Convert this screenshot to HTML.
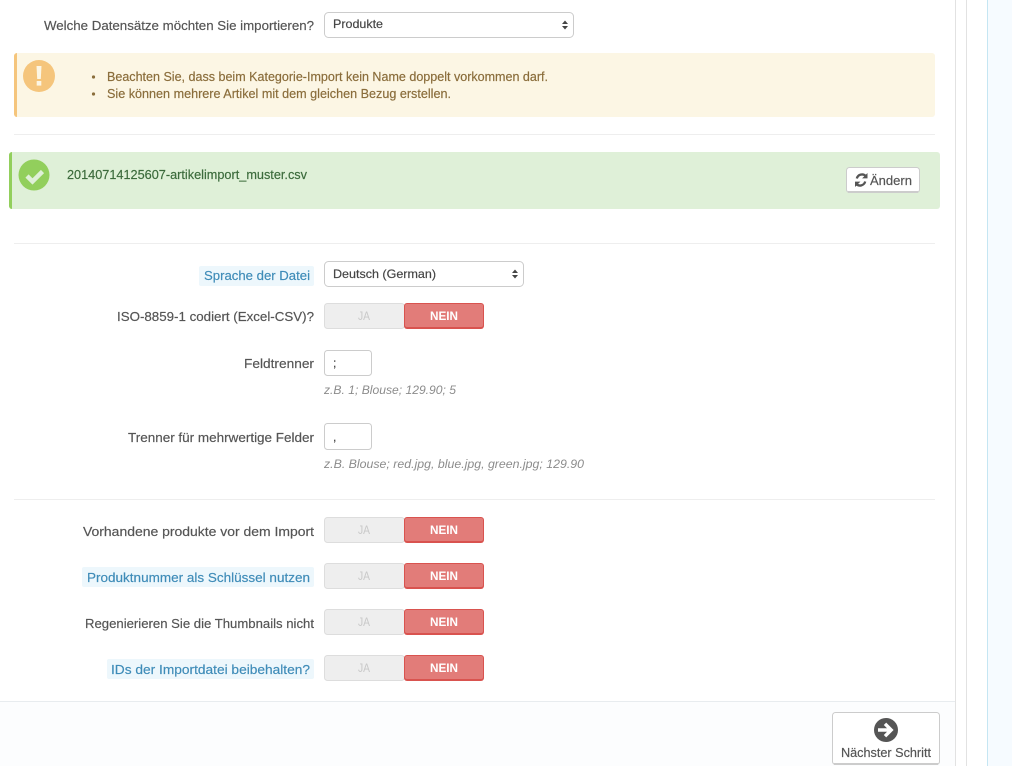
<!DOCTYPE html>
<html lang="de">
<head>
<meta charset="utf-8">
<title>Import</title>
<style>
html,body{margin:0;padding:0;background:#fff;width:1012px;height:766px;overflow:hidden}
svg{display:block}
text{font-family:"Liberation Sans",sans-serif;font-size:13px;fill:#555;stroke:#555;stroke-width:.18px}
.b{fill:#3f8cb8;stroke:#3f8cb8}
.w{fill:#8a6d3b;stroke:#8a6d3b;font-size:12.5px}
.h{fill:#8c8c8c;stroke:none;font-size:12px;font-style:italic}
.ja{fill:#c8c8c8;stroke:none;font-size:12px}
.ne{fill:#fff;stroke:none;font-size:12px;font-weight:bold}
.s{font-size:12px;fill:#444;stroke:#444}
.g{fill:#3c6b3c;stroke:#3c6b3c;font-size:12.5px}
.c{fill:#fff;stroke:#ccc;stroke-width:1}
</style>
</head>
<body>
<svg width="1012" height="766" viewBox="0 0 1012 766" xmlns="http://www.w3.org/2000/svg">
<defs>
<g id="sw">
<rect x="324.5" y="0.5" width="80" height="25" rx="3" fill="#eee" stroke="#ddd"/>
<rect x="404" y="0" width="80" height="26" rx="3" fill="#d9534f"/>
<rect x="405" y="1" width="78" height="23" rx="2" fill="#e27c79"/>
<text class="ja" x="358" y="17" textLength="12" lengthAdjust="spacingAndGlyphs">JA</text>
<text class="ne" x="430" y="17" textLength="28" lengthAdjust="spacingAndGlyphs">NEIN</text>
</g>
<g id="ar"><path d="M0 -4.5L3 -1H-3Z M0 4.5L3 1H-3Z" fill="#444"/></g>
</defs>

<rect x="955" y="0" width="1" height="766" fill="#e2e2e2"/>
<rect x="966" y="0" width="1" height="766" fill="#e2e2e2"/>
<rect x="987" y="0" width="1" height="766" fill="#c5e6f3"/>
<rect x="988" y="0" width="24" height="766" fill="#f6fbff"/>

<text x="44" y="30" textLength="270" lengthAdjust="spacingAndGlyphs">Welche Datensätze möchten Sie importieren?</text>
<rect class="c" x="324.5" y="12.5" width="249" height="25" rx="4"/>
<text class="s" x="333" y="28" textLength="50" lengthAdjust="spacingAndGlyphs">Produkte</text>
<use href="#ar" x="565" y="25"/>

<rect x="14" y="53" width="921" height="64" rx="3" fill="#fcf6e4"/>
<path d="M17 53a3 3 0 0 0-3 3v58a3 3 0 0 0 3 3z" fill="#f5c57c"/>
<circle cx="39" cy="76" r="16" fill="#f5c57c"/>
<path d="M36.5 66h5l-.7 13h-3.6z" fill="#fcf6e4"/>
<rect x="36.7" y="81" width="4.6" height="4.6" fill="#fcf6e4"/>
<circle cx="93.5" cy="77" r="1.6" fill="#8a6d3b"/>
<circle cx="93.5" cy="94" r="1.6" fill="#8a6d3b"/>
<text class="w" x="107" y="81" textLength="441" lengthAdjust="spacingAndGlyphs">Beachten Sie, dass beim Kategorie-Import kein Name doppelt vorkommen darf.</text>
<text class="w" x="107" y="98" textLength="344" lengthAdjust="spacingAndGlyphs">Sie können mehrere Artikel mit dem gleichen Bezug erstellen.</text>

<rect x="14" y="134" width="921" height="1" fill="#eee"/>

<rect x="9" y="152" width="931" height="57" rx="3" fill="#dff0d8"/>
<path d="M12 152a3 3 0 0 0-3 3v51a3 3 0 0 0 3 3z" fill="#92cf5c"/>
<circle cx="34" cy="175" r="15.5" fill="#92cf5c"/>
<path d="M27 176l5.5 5.5 10-10" fill="none" stroke="#dff0d8" stroke-width="4.5"/>
<text class="g" x="67" y="179" textLength="240" lengthAdjust="spacingAndGlyphs">20140714125607-artikelimport_muster.csv</text>

<rect x="846.5" y="167.5" width="73" height="25" rx="3" fill="#fff" stroke="#ccc"/>
<rect x="848" y="191" width="70" height="2" fill="#ccc"/>
<path d="M856.8 178.5a5.4 5.4 0 0 1 9-2.5" fill="none" stroke="#555" stroke-width="2.3"/>
<path d="M867.5 173v5.4h-5.4z" fill="#555"/>
<path d="M865.2 181.5a5.4 5.4 0 0 1-9 2.5" fill="none" stroke="#555" stroke-width="2.3"/>
<path d="M855 187v-5.4h5.4z" fill="#555"/>
<text x="870" y="185" textLength="42" lengthAdjust="spacingAndGlyphs">Ändern</text>

<rect x="14" y="243" width="921" height="1" fill="#eee"/>

<rect x="199" y="266" width="115" height="20" rx="2" fill="#edf7fc"/>
<text class="b" x="204" y="280" textLength="106" lengthAdjust="spacingAndGlyphs">Sprache der Datei</text>
<rect class="c" x="324.5" y="261.5" width="199" height="25" rx="4"/>
<text class="s" x="333" y="278" textLength="103" lengthAdjust="spacingAndGlyphs">Deutsch (German)</text>
<use href="#ar" x="515" y="274"/>

<text x="117" y="321" textLength="197" lengthAdjust="spacingAndGlyphs">ISO-8859-1 codiert (Excel-CSV)?</text>
<use href="#sw" x="0" y="303"/>

<text x="244" y="368" textLength="70" lengthAdjust="spacingAndGlyphs">Feldtrenner</text>
<rect class="c" x="324.5" y="350.5" width="47" height="25" rx="3"/>
<text class="s" x="333" y="367">;</text>
<text class="h" x="324" y="394" textLength="132" lengthAdjust="spacingAndGlyphs">z.B. 1; Blouse; 129.90; 5</text>

<text x="128" y="442" textLength="186" lengthAdjust="spacingAndGlyphs">Trenner für mehrwertige Felder</text>
<rect class="c" x="324.5" y="423.5" width="47" height="26" rx="3"/>
<text class="s" x="333" y="441">,</text>
<text class="h" x="324" y="468" textLength="260" lengthAdjust="spacingAndGlyphs">z.B. Blouse; red.jpg, blue.jpg, green.jpg; 129.90</text>

<rect x="14" y="499" width="921" height="1" fill="#eee"/>

<text x="83" y="536" textLength="231" lengthAdjust="spacingAndGlyphs">Vorhandene produkte vor dem Import</text>
<use href="#sw" x="0" y="517"/>

<rect x="82" y="567" width="232" height="20" rx="2" fill="#edf7fc"/>
<text class="b" x="87" y="582" textLength="223" lengthAdjust="spacingAndGlyphs">Produktnummer als Schlüssel nutzen</text>
<use href="#sw" x="0" y="563"/>

<text x="85" y="628" textLength="229" lengthAdjust="spacingAndGlyphs">Regenierieren Sie die Thumbnails nicht</text>
<use href="#sw" x="0" y="609"/>

<rect x="107" y="659" width="207" height="20" rx="2" fill="#edf7fc"/>
<text class="b" x="111" y="674" textLength="199" lengthAdjust="spacingAndGlyphs">IDs der Importdatei beibehalten?</text>
<use href="#sw" x="0" y="655"/>

<rect x="0" y="701" width="955" height="65" fill="#fcfdfe"/>
<rect x="0" y="701" width="955" height="1" fill="#e8ecef"/>

<rect x="832.5" y="712.5" width="107" height="52" rx="3" fill="#fff" stroke="#ccc"/>
<rect x="834" y="763" width="104" height="2" fill="#ccc"/>
<circle cx="886" cy="730" r="12" fill="#555"/>
<path d="M878 730h12M885 723.8l6.2 6.2-6.2 6.2" fill="none" stroke="#fff" stroke-width="3.4"/>
<text x="841" y="757" textLength="90" lengthAdjust="spacingAndGlyphs">Nächster Schritt</text>
</svg>
</body>
</html>
